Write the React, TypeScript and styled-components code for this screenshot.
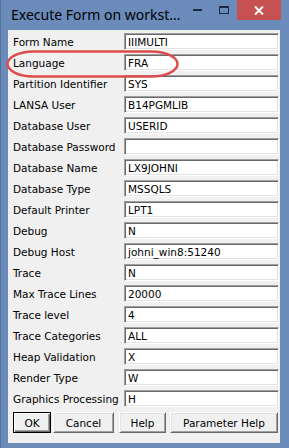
import React from 'react';
import styled, { createGlobalStyle } from 'styled-components';

const Global = createGlobalStyle`
  html, body { margin: 0; padding: 0; background: #6b8cbb; }
  body { width: 289px; height: 448px; overflow: hidden; }
`;

const Win = styled.div`
  position: relative;
  width: 289px;
  height: 448px;
  box-sizing: border-box;
  background: #6b8cbb;
  box-shadow: inset 1px 0 #50709e;
  padding-bottom: 5px;
  display: flex;
  flex-direction: column;
`;

const TitleBar = styled.div`
  height: 30px;
  flex: none;
  display: flex;
  align-items: flex-start;
  padding-right: 8px;
`;

const Title = styled.div`
  flex: 1;
  padding: 5px 0 0 11px;
  font-family: 'Noto Sans', sans-serif;
  font-size: 14px;
  line-height: 20px;
  color: #000;
  white-space: nowrap;
`;

const CaptionBtn = styled.div<{ $w: number; $bg?: string }>`
  width: ${(p) => p.$w}px;
  height: 20px;
  background: ${(p) => p.$bg || 'transparent'};
  display: flex;
  align-items: center;
  justify-content: center;
`;

const Client = styled.div`
  flex: 1;
  margin: 0 9px 0 8px;
  background: #f0f0f0;
  padding: 3px 1px 0 5px;
  display: flex;
  flex-direction: column;
`;

const Form = styled.div`
  display: grid;
  grid-template-columns: 111px 1fr;
  grid-auto-rows: 17px;
  row-gap: 4px;
`;

const Label = styled.div`
  font-family: 'DejaVu Sans', sans-serif;
  font-size: 10.5px;
  line-height: 17px;
  padding-top: 1px;
  color: #000;
  white-space: nowrap;
`;

const Field = styled.div`
  box-sizing: border-box;
  height: 17px;
  background: #fff;
  border-top: 1px solid #a0a0a0;
  border-left: 1px solid #a0a0a0;
  border-right: 1px solid #fff;
  border-bottom: 1px solid #fff;
  box-shadow: inset 1px 1px #696969, inset -1px -1px #e3e3e3;
  padding-left: 3px;
  font-family: 'DejaVu Sans', sans-serif;
  font-size: 10.5px;
  line-height: 15px;
  padding-top: 1px;
  color: #000;
  white-space: nowrap;
  overflow: hidden;
`;

const ButtonRow = styled.div`
  display: flex;
  margin-top: 5px;
`;

const Button = styled.div<{ $w: number; $ml?: number; $default?: boolean }>`
  box-sizing: border-box;
  width: ${(p) => p.$w}px;
  margin-left: ${(p) => p.$ml || 0}px;
  height: 21px;
  background: #f0f0f0;
  display: flex;
  align-items: center;
  justify-content: center;
  font-family: 'DejaVu Sans', sans-serif;
  font-size: 10.5px;
  color: #000;
  ${(p) =>
    p.$default
      ? `border: 1px solid #000;
         box-shadow: inset 1px 1px #fff, inset -1px -1px #696969, inset -2px -2px #a0a0a0;`
      : `border-top: 1px solid #fff; border-left: 1px solid #fff;
         border-right: 1px solid #696969; border-bottom: 1px solid #696969;
         box-shadow: inset 1px 1px #e3e3e3, inset -1px -1px #a0a0a0;`}
`;

const Highlight = styled.svg`
  position: absolute;
  left: 0;
  top: 0;
  pointer-events: none;
`;

const rows: [string, string][] = [
  ['Form Name', 'IIIMULTI'],
  ['Language', 'FRA'],
  ['Partition Identifier', 'SYS'],
  ['LANSA User', 'B14PGMLIB'],
  ['Database User', 'USERID'],
  ['Database Password', ''],
  ['Database Name', 'LX9JOHNI'],
  ['Database Type', 'MSSQLS'],
  ['Default Printer', 'LPT1'],
  ['Debug', 'N'],
  ['Debug Host', 'johni_win8:51240'],
  ['Trace', 'N'],
  ['Max Trace Lines', '20000'],
  ['Trace level', '4'],
  ['Trace Categories', 'ALL'],
  ['Heap Validation', 'X'],
  ['Render Type', 'W'],
  ['Graphics Processing', 'H'],
];

export default function App() {
  return (
    <Win>
      <Global />
      <TitleBar>
        <Title>Execute Form on workst...</Title>
        <CaptionBtn $w={26}>
          <svg width="9" height="2" viewBox="0 0 9 2">
            <rect x="0" y="0" width="9" height="2" fill="#1c2a40" />
          </svg>
        </CaptionBtn>
        <CaptionBtn $w={27}>
          <svg width="10" height="8" viewBox="0 0 10 8">
            <rect x="0.5" y="0.5" width="9" height="7" fill="none" stroke="#1c2a40" strokeWidth="1" />
            <rect x="0" y="0" width="10" height="2" fill="#1c2a40" />
          </svg>
        </CaptionBtn>
        <CaptionBtn $w={44} $bg="#c75050">
          <svg width="10" height="9" viewBox="0 0 10 9">
            <path d="M1 0.5 L9 8.5 M9 0.5 L1 8.5" stroke="#fff" strokeWidth="2" />
          </svg>
        </CaptionBtn>
      </TitleBar>
      <Client>
        <Form>
          {rows.map(([l, v]) => (
            <React.Fragment key={l}>
              <Label>{l}</Label>
              <Field>{v}</Field>
            </React.Fragment>
          ))}
        </Form>
        <ButtonRow>
          <Button $w={38} $default>OK</Button>
          <Button $w={61} $ml={2}>Cancel</Button>
          <Button $w={47} $ml={5}>Help</Button>
          <Button $w={108} $ml={4}>Parameter Help</Button>
        </ButtonRow>
      </Client>
      <Highlight width="289" height="448" viewBox="0 0 289 448">
        <rect x="7.5" y="51.5" width="170" height="25" rx="26" ry="12.5" fill="none" stroke="#df4b4b" strokeWidth="2.5" />
      </Highlight>
    </Win>
  );
}
